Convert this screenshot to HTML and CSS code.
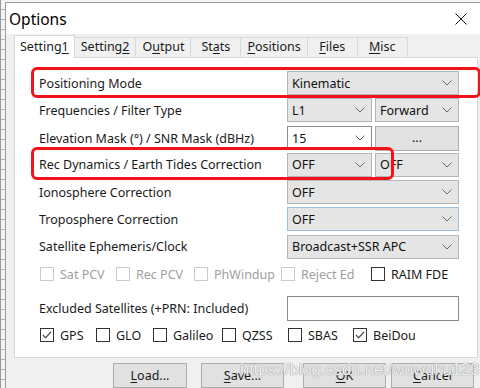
FILE: index.html
```html
<!DOCTYPE html>
<html lang="en">
<head>
    <meta charset="UTF-8">
    <meta name="viewport" content="width=device-width, initial-scale=1.0">
    <title>Options</title>
    <link rel="stylesheet" href="styles.css">
</head>
<body>
<div class="desk">
    <div class="behind"></div>

    <div class="window">
        <div class="titlebar">
            <span class="title">Options</span>
            <svg class="close" viewBox="0 0 12 12">
                <path d="M0.5 0.5 L11.5 11.5 M11.5 0.5 L0.5 11.5"/>
            </svg>
        </div>

        <div class="client">
            <div class="tabs">
                <div class="tab active">Setting<u>1</u></div>
                <div class="tab">Setting<u>2</u></div>
                <div class="tab">O<u>u</u>tput</div>
                <div class="tab">St<u>a</u>ts</div>
                <div class="tab"><u>P</u>ositions</div>
                <div class="tab"><u>F</u>iles</div>
                <div class="tab"><u>M</u>isc</div>
            </div>

            <div class="panel">
                <div class="row">
                    <span class="label">Positioning Mode</span>
                    <div class="combo span2">Kinematic<svg class="arrow" viewBox="0 0 10 6"><polyline points="0.5,0.5 5,5 9.5,0.5"/></svg></div>
                    <div class="mark mark-wide"></div>
                </div>
                <div class="row">
                    <span class="label">Frequencies / Filter Type</span>
                    <div class="combo">L1<svg class="arrow" viewBox="0 0 10 6"><polyline points="0.5,0.5 5,5 9.5,0.5"/></svg></div>
                    <div class="combo">Forward<svg class="arrow" viewBox="0 0 10 6"><polyline points="0.5,0.5 5,5 9.5,0.5"/></svg></div>
                </div>
                <div class="row">
                    <span class="label">Elevation Mask (°) / SNR Mask (dBHz)</span>
                    <div class="combo edit">15<svg class="arrow" viewBox="0 0 10 6"><polyline points="0.5,0.5 5,5 9.5,0.5"/></svg></div>
                    <div class="button small">...</div>
                </div>
                <div class="row">
                    <span class="label">Rec Dynamics / Earth Tides Correction</span>
                    <div class="combo">OFF<svg class="arrow" viewBox="0 0 10 6"><polyline points="0.5,0.5 5,5 9.5,0.5"/></svg></div>
                    <div class="combo">OFF<svg class="arrow" viewBox="0 0 10 6"><polyline points="0.5,0.5 5,5 9.5,0.5"/></svg></div>
                    <div class="mark mark-half"></div>
                </div>
                <div class="row">
                    <span class="label">Ionosphere Correction</span>
                    <div class="combo span2">OFF<svg class="arrow" viewBox="0 0 10 6"><polyline points="0.5,0.5 5,5 9.5,0.5"/></svg></div>
                </div>
                <div class="row">
                    <span class="label">Troposphere Correction</span>
                    <div class="combo span2 focus">OFF<svg class="arrow" viewBox="0 0 10 6"><polyline points="0.5,0.5 5,5 9.5,0.5"/></svg></div>
                </div>
                <div class="row">
                    <span class="label">Satellite Ephemeris/Clock</span>
                    <div class="combo span2">Broadcast+SSR APC<svg class="arrow" viewBox="0 0 10 6"><polyline points="0.5,0.5 5,5 9.5,0.5"/></svg></div>
                </div>

                <div class="checks checks-options">
                    <label class="check disabled"><span class="box"></span>Sat PCV</label>
                    <label class="check disabled"><span class="box"></span>Rec PCV</label>
                    <label class="check disabled"><span class="box"></span>PhWindup</label>
                    <label class="check disabled"><span class="box"></span>Reject Ed</label>
                    <label class="check"><span class="box"></span>RAIM FDE</label>
                </div>

                <div class="row row-excl">
                    <span class="label">Excluded Satellites (+PRN: Included)</span>
                    <div class="textbox span2"></div>
                </div>

                <div class="checks checks-systems">
                    <label class="check"><span class="box"><svg viewBox="0 0 13 13"><polyline points="2,6.5 5,9.5 11,3"/></svg></span>GPS</label>
                    <label class="check"><span class="box"></span>GLO</label>
                    <label class="check"><span class="box"></span>Galileo</label>
                    <label class="check"><span class="box"></span>QZSS</label>
                    <label class="check"><span class="box"></span>SBAS</label>
                    <label class="check"><span class="box"><svg viewBox="0 0 13 13"><polyline points="2,6.5 5,9.5 11,3"/></svg></span>BeiDou</label>
                </div>
            </div>

            <div class="buttons">
                <div class="button"><u>L</u>oad...</div>
                <div class="button btn-save"><u>S</u>ave...</div>
                <div class="button btn-ok"><u>O</u>K</div>
                <div class="button"><u>C</u>ancel</div>
            </div>
        </div>
    </div>

    <div class="watermark">https://blog.csdn.net/wuwuku123</div>
</div>
</body>
</html>
```

FILE: styles.css
```css
* {
    box-sizing: border-box;
}
body {
    margin: 0;
    font-family: "Noto Sans", "Liberation Sans", sans-serif;
    font-size: 12.5px;
    color: #1a1a1a;
}
u {
    text-decoration-thickness: 1px;
    text-underline-offset: 2px;
}
.desk {
    position: relative;
    width: 480px;
    height: 388px;
    overflow: hidden;
    display: flex;
    background: #f4f4f4;
}
/* bit of the window behind the dialog */
.behind {
    flex: none;
    width: 5px;
    border-left: 1px solid #9a9a9a;
    background: repeating-linear-gradient(to bottom, #f4f4f4 0 9px, #b9b9b9 9px 10px);
}
.window {
    flex: none;
    width: 482px;
    margin-top: 2px;
    border-left: 1px solid #9c9c9c;
    border-top: 1px solid #9c9c9c;
    display: flex;
    flex-direction: column;
}
.titlebar {
    height: 31px;
    background: #fff;
    display: flex;
    align-items: center;
    justify-content: space-between;
    padding: 0 20px 0 3px;
}
.title {
    font-size: 15.5px;
    color: #000;
}
.close {
    width: 12px;
    height: 12px;
    stroke: #1a1a1a;
    stroke-width: 1;
    fill: none;
}
.client {
    flex: 1;
    background: #f0f0f0;
    padding: 1px 0 0 8px;
}
.tabs {
    display: flex;
    align-items: flex-end;
    height: 22px;
}
.tab {
    height: 20px;
    min-width: 51px;
    padding: 0 6px;
    text-align: center;
    line-height: 18px;
    background: #f0f0f0;
    border: 1px solid #d9d9d9;
    border-bottom: none;
    margin-left: -1px;
}
.tab.active {
    height: 23px;
    margin: 0 0 -1px 0;
    padding: 0 5px;
    line-height: 22px;
    background: #fff;
    position: relative;
    z-index: 1;
}
.panel {
    width: 464px;
    height: 301px;
    background: #fff;
    border: 1px solid #d9d9d9;
    padding: 13px 0 0 24px;
}
.row {
    position: relative;
    display: grid;
    grid-template-columns: 245px 85px 84px;
    column-gap: 3px;
    align-items: center;
    height: 24px;
    margin-bottom: 3.3px;
}
.span2 {
    grid-column: 2 / 4;
}
.combo {
    height: 24px;
    display: flex;
    align-items: center;
    justify-content: space-between;
    padding: 0 6px 0 4px;
    font-size: 12.5px;
    color: #111;
    background: #e5e5e5;
    border: 1px solid #b5b5b5;
}
.combo.edit {
    background: #fff;
    border-color: #8a8a8a;
}
.combo.focus {
    border-color: #9cbfe0;
}
.arrow {
    width: 10px;
    height: 6px;
    fill: none;
    stroke: #6a6a6a;
    stroke-width: 1;
}
.button {
    height: 25px;
    display: flex;
    align-items: center;
    justify-content: center;
    background: #e1e1e1;
    border: 1px solid #adadad;
}
.button.small {
    align-items: flex-end;
    padding-bottom: 4px;
    line-height: 17px;
}
/* red annotation frames drawn over the rows */
.mark {
    position: absolute;
    top: -4px;
    bottom: -3px;
    left: -8px;
    border: 3px solid #f4121a;
    border-radius: 6px;
}
.mark-wide {
    right: -4px;
}
.mark-half {
    top: -6px;
    right: 83px;
}
.checks {
    display: grid;
    align-items: center;
    height: 16px;
}
.checks-options {
    grid-template-columns: 76px 78px 87px 90px auto;
    margin: 7px 0 0 1px;
}
.checks-systems {
    grid-template-columns: 56px 57px 69px 66px 65px auto;
    margin: 6px 0 0 1px;
}
.check {
    display: flex;
    align-items: center;
    gap: 6px;
}
.box {
    width: 14px;
    height: 14px;
    border: 1px solid #333;
    background: #fff;
}
.box svg {
    display: block;
    width: 12px;
    height: 12px;
    fill: none;
    stroke: #555;
    stroke-width: 1.3;
}
.check.disabled {
    color: #a0a0a0;
}
.check.disabled .box {
    border-color: #cccccc;
}
.row-excl {
    margin: 14px 0 0 0;
    height: 25px;
}
.textbox {
    height: 25px;
    border: 1px solid #8a8a8a;
    background: #fff;
}
.buttons {
    display: flex;
    gap: 5px;
    padding: 5px 0 0 99px;
}
.buttons .button {
    width: 83px;
}
.buttons .button:first-child {
    width: 74px;
}
.btn-save {
    margin-left: 9px;
}
.btn-ok {
    margin-left: 14px;
}
.watermark {
    position: absolute;
    left: 240px;
    top: 360px;
    font-family: "Liberation Sans", sans-serif;
    font-size: 16.5px;
    color: rgba(255, 255, 255, 0.85);
    text-shadow: 0 0 1px #9a9a9a, 0 0 1px #9a9a9a;
}
```
